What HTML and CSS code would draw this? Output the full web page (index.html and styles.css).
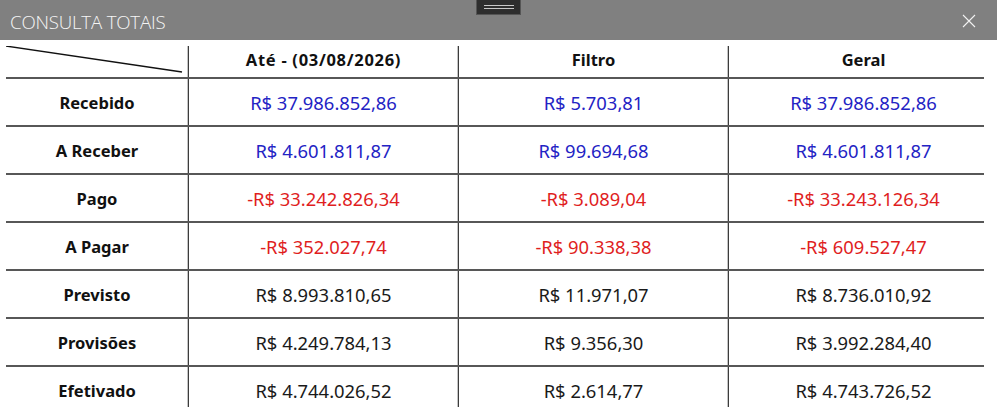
FILE: index.html
```html
<!DOCTYPE html>
<html lang="pt-BR">
<head>
<meta charset="utf-8">
<title>Consulta Totais</title>
<link rel="stylesheet" href="styles.css">
</head>
<body>
<div class="window">
  <header class="titlebar">
    <span class="title">CONSULTA TOTAIS</span>
    <svg class="close" width="14" height="14" viewBox="0 0 14 14"><path d="M1 1 L13 13 M13 1 L1 13" stroke="#f2f2f2" stroke-width="1.1" fill="none"/></svg>
    <div class="handle"><span></span><span></span></div>
  </header>
  <div class="grid">
    <div class="row head">
      <div class="cell corner"><svg width="182" height="31" viewBox="0 0 182 31"><line x1="0" y1="0" x2="176" y2="26" stroke="#111" stroke-width="1.3"/></svg></div>
      <div class="cell col date">Até - (03/08/2026)</div>
      <div class="cell col">Filtro</div>
      <div class="cell col">Geral</div>
    </div>
    <div class="row">
      <div class="cell label">Recebido</div>
      <div class="cell col val blue">R$ 37.986.852,86</div>
      <div class="cell col val blue">R$ 5.703,81</div>
      <div class="cell col val blue">R$ 37.986.852,86</div>
    </div>
    <div class="row">
      <div class="cell label">A Receber</div>
      <div class="cell col val blue">R$ 4.601.811,87</div>
      <div class="cell col val blue">R$ 99.694,68</div>
      <div class="cell col val blue">R$ 4.601.811,87</div>
    </div>
    <div class="row">
      <div class="cell label">Pago</div>
      <div class="cell col val red">-R$ 33.242.826,34</div>
      <div class="cell col val red">-R$ 3.089,04</div>
      <div class="cell col val red">-R$ 33.243.126,34</div>
    </div>
    <div class="row">
      <div class="cell label">A Pagar</div>
      <div class="cell col val red">-R$ 352.027,74</div>
      <div class="cell col val red">-R$ 90.338,38</div>
      <div class="cell col val red">-R$ 609.527,47</div>
    </div>
    <div class="row">
      <div class="cell label">Previsto</div>
      <div class="cell col val">R$ 8.993.810,65</div>
      <div class="cell col val">R$ 11.971,07</div>
      <div class="cell col val">R$ 8.736.010,92</div>
    </div>
    <div class="row">
      <div class="cell label">Provisões</div>
      <div class="cell col val">R$ 4.249.784,13</div>
      <div class="cell col val">R$ 9.356,30</div>
      <div class="cell col val">R$ 3.992.284,40</div>
    </div>
    <div class="row">
      <div class="cell label">Efetivado</div>
      <div class="cell col val">R$ 4.744.026,52</div>
      <div class="cell col val">R$ 2.614,77</div>
      <div class="cell col val">R$ 4.743.726,52</div>
    </div>
  </div>
</div>
</body>
</html>
```
FILE: styles.css
```css
html, body {
  margin: 0;
  padding: 0;
  background: #ffffff;
  overflow: hidden;
}
body {
  width: 997px;
  height: 407px;
  font-family: "Noto Sans", "Open Sans", sans-serif;
}
.window {
  width: 997px;
  height: 407px;
  overflow: hidden;
}
.titlebar {
  position: relative;
  height: 40px;
  background: #808080;
  display: flex;
  align-items: center;
  justify-content: space-between;
  padding: 0 21px 0 10px;
  box-sizing: border-box;
}
.title {
  font-family: "Open Sans", "Noto Sans", sans-serif;
  font-weight: 300;
  font-size: 18.7px;
  color: #f6f6f6;
  letter-spacing: -0.2px;
  margin-top: 2px;
}
.close {
  display: block;
  margin-top: 1px;
}
.handle {
  position: absolute;
  left: 476px;
  top: 0;
  width: 45px;
  height: 15px;
  background: #2e2e2e;
  border: 1px solid #555;
  border-top: none;
  box-sizing: border-box;
  display: flex;
  flex-direction: column;
  align-items: center;
  padding-top: 5px;
  gap: 2px;
}
.handle span {
  display: block;
  width: 30px;
  height: 1px;
  background: #c8c8c8;
}
.grid {
  margin: 6px 0 0 6px;
}
.row {
  width: 978px;
  display: grid;
  grid-template-columns: 182px 270px 270px 270px;
  height: 48px;
  border-bottom: 2px solid #575757;
  box-sizing: border-box;
}
.row.head {
  height: 33px;
}
.cell {
  display: flex;
  align-items: center;
  justify-content: center;
  white-space: nowrap;
}
.corner {
  justify-content: flex-start;
  align-items: flex-start;
}
.corner svg {
  display: block;
}
.col {
  border-left: 1px solid #3c3c3c;
  box-shadow: -1px 0 0 #c4c4c4;
}
.head .col {
  font-weight: 700;
  font-size: 16.5px;
  color: #111;
  padding-bottom: 4px;
  box-sizing: border-box;
}
.head .date {
  letter-spacing: 0.7px;
}
.label {
  font-weight: 700;
  font-size: 16.5px;
  color: #111;
}
.val {
  font-size: 18.4px;
  color: #1a1a1a;
}
.blue {
  color: #2323c4;
}
.red {
  color: #e01e1e;
}
```
